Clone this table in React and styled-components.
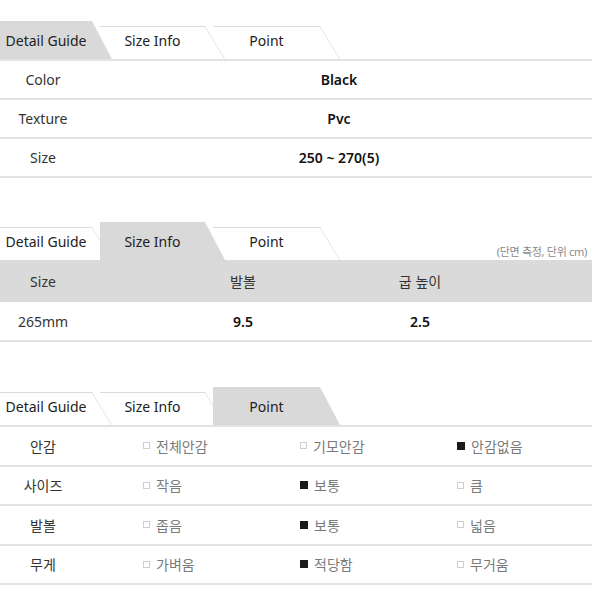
import React from "react";
import styled, { createGlobalStyle } from "styled-components";

const Global = createGlobalStyle`
  html, body { margin: 0; padding: 0; background: #fff; }
  body { font-family: "Noto Sans", "Noto Sans CJK KR", sans-serif; color: #222; }
`;

const Page = styled.div`
  width: 592px;
  padding-top: 21px;
  display: flex;
  flex-direction: column;
`;

const Section = styled.section`
  display: flex;
  flex-direction: column;
  margin-bottom: ${(p) => p.$gap || 0}px;
`;

const TabBar = styled.div`
  display: flex;
  align-items: flex-end;
  height: 38px;
`;

const SLANT = 20;

const Tab = styled.div`
  position: relative;
  z-index: ${(p) => (p.$active ? 20 : 10 - p.$i)};
  flex: none;
  box-sizing: border-box;
  width: ${(p) => p.$w}px;
  height: ${(p) => (p.$active ? 38 : 33)}px;
  margin-right: ${(p) => -p.$overlap}px;
  padding: 0 ${SLANT}px 8px 0;
  display: flex;
  align-items: flex-end;
  justify-content: center;
  font-size: 14px;
  line-height: 20px;
  color: #222;
  background: ${(p) => (p.$active ? "#d9d9d9" : "#fff")};
  box-shadow: ${(p) => (p.$active ? "none" : "inset 0 1px 0 #dcdcdc")};
  clip-path: polygon(0 0, calc(100% - ${SLANT}px) 0, 100% 100%, 0 100%);

  &::after {
    content: "";
    position: absolute;
    top: 0;
    right: 0;
    width: ${SLANT}px;
    height: 100%;
    display: ${(p) => (p.$active ? "none" : "block")};
    background: linear-gradient(
      to top right,
      transparent calc(50% - 1px),
      #d4d4d4 50%,
      transparent calc(50% + 1px)
    );
  }
`;

const Note = styled.span`
  margin-left: auto;
  align-self: flex-end;
  padding: 0 5px 1px 0;
  font-size: 11px;
  color: #8a8a8a;
  letter-spacing: -0.3px;
`;

const Table = styled.div`
  display: flex;
  flex-direction: column;
  border-top: ${(p) => (p.$lined ? "2px solid #e2e2e2" : "none")};
`;

const Row = styled.div`
  display: grid;
  grid-template-columns: ${(p) => p.$cols};
  align-items: center;
  height: ${(p) => p.$h}px;
  background: ${(p) => (p.$head ? "#dadada" : "#fff")};
  border-bottom: ${(p) => (p.$head ? "none" : "2px solid #e2e2e2")};
`;

const Cell = styled.div`
  display: flex;
  justify-content: center;
  font-size: 14px;
  font-weight: ${(p) => (p.$bold ? 600 : 400)};
  color: ${(p) => (p.$bold ? "#111" : "#333")};
  white-space: nowrap;
`;

const Option = styled.div`
  display: flex;
  align-items: center;
  gap: 6px;
  padding-left: 57px;
  font-size: 14px;
  color: #7a7a7a;
  white-space: nowrap;
`;

const Box = styled.span`
  flex: none;
  box-sizing: border-box;
  width: ${(p) => (p.$on ? 8 : 7)}px;
  height: ${(p) => (p.$on ? 8 : 7)}px;
  border: 1px solid ${(p) => (p.$on ? "#1a1a1a" : "#cfcfcf")};
  background: ${(p) => (p.$on ? "#1a1a1a" : "#fff")};
`;

const TABS = [
  { label: "Detail Guide", w: 112, overlap: 12 },
  { label: "Size Info", w: 125, overlap: 12 },
  { label: "Point", w: 127, overlap: 0 },
];

function Tabs({ active, note }) {
  return (
    <TabBar>
      {TABS.map((t, i) => (
        <Tab key={t.label} $i={i} $w={t.w} $overlap={t.overlap} $active={i === active}>
          {t.label}
        </Tab>
      ))}
      {note && <Note>{note}</Note>}
    </TabBar>
  );
}

const detail = [
  ["Color", "Black"],
  ["Texture", "Pvc"],
  ["Size", "250 ~ 270(5)"],
];

const points = [
  ["안감", [["전체안감", false], ["기모안감", false], ["안감없음", true]]],
  ["사이즈", [["작음", false], ["보통", true], ["큼", false]]],
  ["발볼", [["좁음", false], ["보통", true], ["넓음", false]]],
  ["무게", [["가벼움", false], ["적당함", true], ["무거움", false]]],
];

export default function App() {
  return (
    <>
      <Global />
      <Page>
        <Section $gap={44}>
          <Tabs active={0} />
          <Table $lined>
            {detail.map(([k, v]) => (
              <Row key={k} $cols="86px 1fr" $h={37}>
                <Cell>{k}</Cell>
                <Cell $bold>{v}</Cell>
              </Row>
            ))}
          </Table>
        </Section>

        <Section $gap={45}>
          <Tabs active={1} note="(단면 측정, 단위 cm)" />
          <Table>
            <Row $head $cols="86px 314px 40px" $h={42}>
              <Cell>Size</Cell>
              <Cell>발볼</Cell>
              <Cell>굽 높이</Cell>
            </Row>
            <Row $cols="86px 314px 40px" $h={38}>
              <Cell>265mm</Cell>
              <Cell $bold>9.5</Cell>
              <Cell $bold>2.5</Cell>
            </Row>
          </Table>
        </Section>

        <Section>
          <Tabs active={2} />
          <Table $lined>
            {points.map(([k, opts]) => (
              <Row key={k} $cols="86px repeat(3, 157px)" $h={37.5}>
                <Cell>{k}</Cell>
                {opts.map(([o, on]) => (
                  <Option key={o}>
                    <Box $on={on} />
                    {o}
                  </Option>
                ))}
              </Row>
            ))}
          </Table>
        </Section>
      </Page>
    </>
  );
}
